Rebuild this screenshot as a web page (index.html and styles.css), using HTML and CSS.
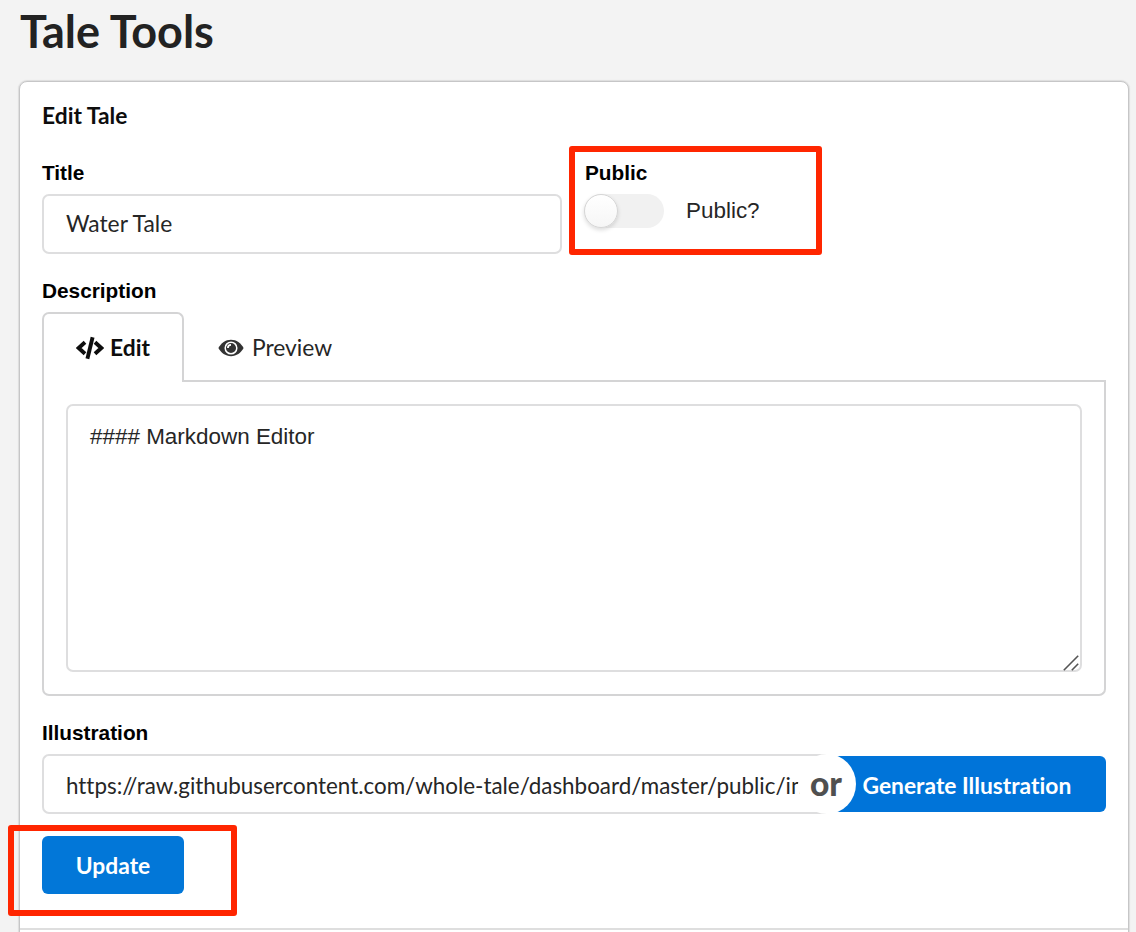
FILE: index.html
```html
<!DOCTYPE html>
<html lang="en">
<head>
<meta charset="utf-8">
<title>Tale Tools</title>
<link rel="stylesheet" href="styles.css">
</head>
<body>
<h1 class="page-title"><span>Tale Tools</span></h1>
<main class="card">
  <h2 class="card-title">Edit Tale</h2>
  <div class="top-row">
    <div class="field title-field">
      <div class="label">Title</div>
      <div class="input"><span class="water">Water Tale</span></div>
    </div>
    <div class="field public-field">
      <div class="label">Public</div>
      <div class="toggle-row"><span class="toggle"><span class="knob"></span></span><span class="toggle-text">Public?</span></div>
      <div class="highlight highlight-public"></div>
    </div>
  </div>
  <div class="label desc-label">Description</div>
  <div class="tabs">
    <div class="tab active">
      <svg class="code-icon" width="28" height="24" viewBox="0 0 28 24" fill="none" stroke="#0d0d0d"><path d="M9 6.300 2.700 12 9 17.700M19 6.300 25.300 12 19 17.700" stroke-width="3.900"/><path d="M16.600 1.200 11.400 22.800" stroke-width="3.900"/></svg>
      <span class="tab-label">Edit</span>
    </div>
    <div class="tab preview">
      <svg class="eye-icon" width="26" height="18" viewBox="0 0 26 18"><path d="M.4 9C3 4.200 7.500.8 13 .8S23 4.200 25.600 9C23 13.800 18.500 17.200 13 17.200S3 13.800.4 9Z" fill="#333"/><circle cx="13" cy="9" r="5.800" fill="#333" stroke="#fff" stroke-width="1.500"/><path d="M9.900 9a3.100 3.100 0 0 1 3.100-3.100" fill="none" stroke="#fff" stroke-width="1.800"/></svg>
      <span class="tab-label">Preview</span>
    </div>
    <div class="tab-line"></div>
  </div>
  <div class="panel">
    <div class="editor">#### Markdown Editor
      <svg class="grip" width="16" height="16" viewBox="0 0 16 16" stroke="#555" stroke-width="1.600"><path d="M.8 15.200 15.200.8M8.800 15.200 15.200 8.800"/></svg>
    </div>
  </div>
  <div class="label ill-label">Illustration</div>
  <div class="ill-row">
    <div class="input url-input"><span class="url">https://raw.githubusercontent.com/whole-tale/dashboard/master/public/in</span></div>
    <div class="button generate"><span class="generate-text">Generate Illustration</span></div>
    <span class="or">or</span>
  </div>
  <div class="update-row">
    <div class="button update"><span class="update-text">Update</span></div>
    <div class="highlight highlight-update"></div>
  </div>
  <div class="divider"></div>
</main>
</body>
</html>
```
FILE: styles.css
```css
* { box-sizing: border-box; }
html { overflow: hidden; }
body { margin: 0; height: 932px; overflow: hidden; background: #f3f3f3; padding: 0 7px 0 19px; font-family: Lato, sans-serif; font-variant-ligatures: none; color: #262626; }
.page-title { margin: 0; height: 81px; padding: 3px 0 0 1px; font-size: 45px; line-height: 56px; font-weight: 700; color: #222; white-space: nowrap; }
.card { height: 870px; background: #fff; border: 1px solid #c6c6c7; border-radius: 8px; box-shadow: 0 0 1px 1px #ddd; padding: 0 22px; }
.card-title { margin: 0; height: 78px; padding-top: 19px; font-size: 22.800px; line-height: 28px; font-weight: 700; color: #0d0d0d; }
.top-row { display: flex; height: 118px; }
.title-field { width: 520px; }
.public-field { position: relative; margin-left: 22px; }
.label { height: 34px; line-height: 26px; font-family: "Liberation Sans", sans-serif; font-size: 20.8px; font-weight: 700; color: #000; }
.input { height: 60px; border: 2px solid #dededf; border-radius: 7px; padding: 0 22px; line-height: 54px; font-size: 22.800px; white-space: nowrap; overflow: hidden; }
.public-field .label { padding-left: 1px; }
.toggle-row { display: flex; }
.toggle { width: 80px; height: 34px; border-radius: 17px; background: #f1f1f1; }
.knob { display: block; width: 34px; height: 34px; border-radius: 50%; border: 1px solid #d6d6d6; background: linear-gradient(#fff, #f6f6f6); box-shadow: 0 2px 4px rgba(0,0,0,.14); }
.toggle-text { padding-left: 22px; line-height: 34px; font-family: "Liberation Sans", sans-serif; font-size: 22.450px; }
.highlight { position: absolute; border: 6px solid #ff2600; border-radius: 3px; }
.highlight-public { left: -15px; top: -14px; width: 253px; height: 109px; }
.tabs { display: flex; height: 70px; }
.tab { display: flex; align-items: center; font-size: 22.800px; line-height: 28px; }
.tab-label { padding-bottom: 2px; }
.active { width: 142px; border: 2px solid #d4d4d5; border-bottom: 0; border-radius: 7px 7px 0 0; padding-left: 32px; gap: 6px; font-weight: 700; color: #0d0d0d; }
.preview { width: 152px; padding: 4px 0 0 34px; gap: 8px; border-bottom: 2px solid #d4d4d5; }
.tab-line { flex: 1; border-bottom: 2px solid #d4d4d5; }
.panel { height: 314px; border: 2px solid #d4d4d5; border-top: 0; border-radius: 0 0 7px 7px; padding: 22px; }
.editor { position: relative; height: 268px; border: 2px solid #dededf; border-radius: 7px; padding: 17px 22px; font-family: "Liberation Sans", sans-serif; font-size: 22.450px; line-height: 28px; }
.grip { position: absolute; right: 1px; bottom: -1px; }
.ill-label { margin-top: 24px; }
.ill-row { position: relative; display: flex; height: 60px; }
.url-input { width: 784px; border-right: 0; border-radius: 7px 0 0 7px; line-height: 60px; font-size: 22.400px; }
.button { display: flex; align-items: center; color: #fff; background: #0277d8; font-size: 22.800px; font-weight: 700; border-radius: 6px; white-space: nowrap; }
.generate { flex: 1; height: 56px; margin-top: 2px; padding: 1px 0 0 36.500px; background: #0074d9; border-radius: 0 6px 6px 0; }
.or { position: absolute; left: 756px; top: 0; width: 58px; height: 60px; border-radius: 50%; background: #fff; color: #505050; font-size: 33.500px; font-weight: 900; line-height: 59px; text-align: center; padding-right: 2px; }
.update-row { position: relative; height: 114px; padding-top: 22px; }
.update { width: 142px; height: 58px; padding-bottom: 1px; justify-content: center; }
.highlight-update { left: -34px; top: 11px; width: 229px; height: 91px; }
.divider { height: 2px; margin: 0 -22px; background: #dedede; }
```
